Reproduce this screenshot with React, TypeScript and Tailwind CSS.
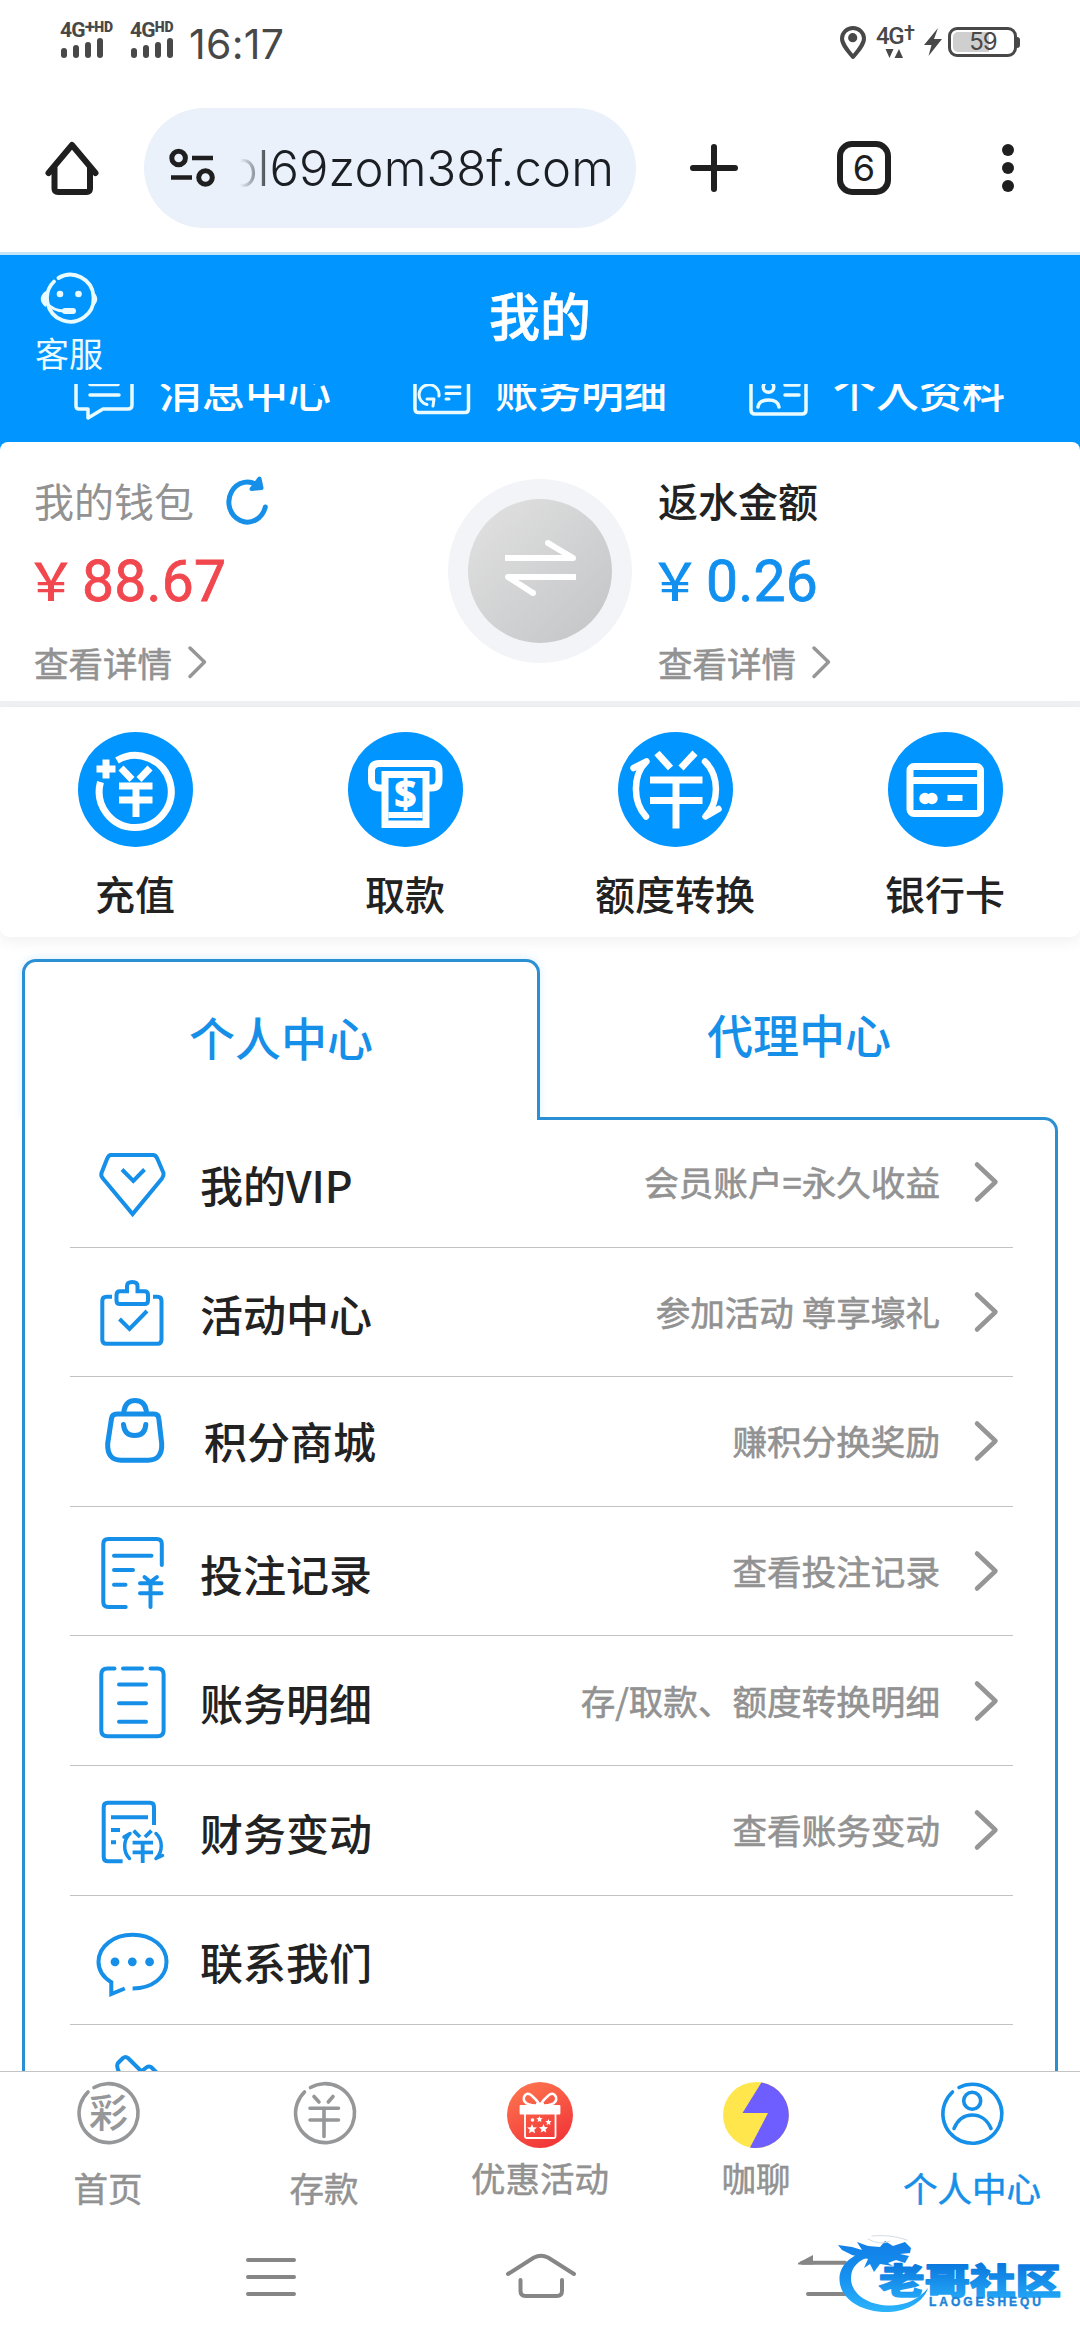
import type { ReactNode } from "react";

const BLUE = "#168fe8";
const GREY = "#969799";

type IconProps = {
  box: [number, number, number, number];
  color?: string;
  stroke?: number;
  className?: string;
  butt?: boolean;
  children: ReactNode;
};

/* Line icon; `box` is x, y, width, height of its view. */
function Icon({ box, color = BLUE, stroke = 4, className = "", butt = false, children }: IconProps) {
  return (
    <svg
      viewBox={box.join(" ")}
      width={box[2]}
      height={box[3]}
      fill="none"
      stroke={color}
      strokeWidth={stroke}
      strokeLinecap={butt ? "butt" : "round"}
      strokeLinejoin={butt ? "miter" : "round"}
      className={`shrink-0 ${className}`}
    >
      {children}
    </svg>
  );
}

function Signal({ plus }: { plus?: boolean }) {
  return (
    <div className="flex flex-col">
      <div className="flex h-[15px] items-start font-['Roboto'] text-[21px] leading-[16px] font-bold tracking-[-0.8px]">
        <span>4G</span>
        {plus && <span className="text-[19px] leading-[9px]">+</span>}
        <span className="text-[14px] leading-[11px] font-black tracking-[-0.2px]">HD</span>
      </div>
      <div className="mt-px flex h-[20px] items-end gap-[6px] pl-px">
        <i className="h-[10px] w-[6px] rounded-sm bg-[#484848]" />
        <i className="h-[13px] w-[6px] rounded-sm bg-[#484848]" />
        <i className="h-[16px] w-[6px] rounded-sm bg-[#484848]" />
        <i className="h-[20px] w-[6px] rounded-sm bg-[#484848]" />
      </div>
    </div>
  );
}

function StatusBar() {
  return (
    <div className="flex h-[90px] shrink-0 items-start text-[#484848]">
      <div className="mt-[22px] ml-[60px] w-[70px]"><Signal plus /></div>
      <div className="mt-[22px] w-[59px]"><Signal /></div>
      <div className="mt-[24px] font-['Inter'] text-[41px] leading-[41px] tracking-[0.3px]">16:17</div>
      <Icon box={[838, 24, 30, 38]} color="#484848" stroke={4} className="mt-[24px] ml-auto">
        <path d="M853 57C847 50 842 44 842 38.500A11 10.500 0 0 1 864 38.500C864 44 859 50 853 57Z" />
        <circle cx="852.700" cy="37.700" r="4.600" fill="#484848" stroke="none" />
      </Icon>
      <div className="mt-[26px] ml-[8px] flex w-[40px] flex-col">
        <div className="flex h-[20px] font-['Roboto'] text-[24px] leading-[20px] font-medium tracking-[-1.5px]">
          <span>4G</span>
          <span className="ml-px text-[20px] leading-[14px]">†</span>
        </div>
        <Icon box={[884, 48, 20, 11]} color="none" className="ml-[8px] mt-[2px]">
          <path d="M885.500 49h8l-4 9zM894.500 58h8.500l-4-9z" fill="#484848" />
        </Icon>
      </div>
      <Icon box={[922, 26, 22, 34]} color="none" className="mt-[26px] ml-[6px]">
        <path d="M938 28L924 45H931.500L928.500 56L942 39H934Z" fill="#484848" />
      </Icon>
      <div className="mt-[27px] ml-[4px] flex h-[30px] w-[69px] items-center rounded-[9px] border-[3px] border-[#484848] p-[2px]">
        <div className="flex h-full w-[36px] items-center justify-center overflow-visible rounded-l-[5px] bg-[#cfcfcf] pl-[24px]">
          <span className="font-['Inter'] text-[24px] leading-[24px] tracking-[-1px]">59</span>
        </div>
      </div>
      <i className="mt-[37px] mr-[60px] h-[11px] w-[3px] rounded-r bg-[#484848]" />
    </div>
  );
}

function BrowserBar() {
  return (
    <div className="flex h-[162px] shrink-0 items-start border-b-0">
      <Icon box={[42, 138, 60, 60]} color="#1f1f1f" stroke={6} className="mt-[48px] ml-[42px]">
        <path d="M48.500 173L72 145L95.500 173M54.500 167V188.500Q54.500 192 58 192H86.500Q90 192 90 188.500V167" />
      </Icon>
      <div className="mt-[18px] ml-[42px] flex h-[120px] w-[492px] items-center rounded-full bg-[#eaf1fb] pr-[22px] pl-[24px]">
        <Icon box={[168, 146, 50, 44]} color="#1f1f1f" stroke={5} butt>
          <circle cx="178.600" cy="158" r="6.800" />
          <circle cx="205.500" cy="177.500" r="6.800" />
          <path d="M192 158h21M171 177.500h21" strokeWidth="4.500" />
        </Icon>
        <div className="ml-[22px] flex h-[60px] flex-1 items-center justify-end overflow-hidden [mask-image:linear-gradient(to_right,transparent,black_34px)] whitespace-nowrap">
          <span className="relative top-px font-['Inter'] text-[49px] leading-[60px] font-light tracking-[0.1px] text-[#1b1f24]">ol69zom38f.com</span>
        </div>
      </div>
      <Icon box={[688, 142, 52, 52]} color="#1f1f1f" stroke={6} className="mt-[52px] ml-[52px]">
        <path d="M693 168h42M714 147v42" />
      </Icon>
      <div className="mt-[51px] ml-[97px] flex h-[54px] w-[54px] items-center justify-center rounded-[15px] border-[6px] border-[#1f1f1f]">
        <span className="font-['Inter'] text-[36px] leading-[36px] text-[#1f1f1f]">6</span>
      </div>
      <div className="mt-[54px] ml-[111px] flex flex-col gap-[6px]">
        <i className="size-[12px] rounded-full bg-[#1f1f1f]" />
        <i className="size-[12px] rounded-full bg-[#1f1f1f]" />
        <i className="size-[12px] rounded-full bg-[#1f1f1f]" />
      </div>
    </div>
  );
}

function Header() {
  return (
    <div className="flex h-[190px] shrink-0 flex-col border-t-[3px] border-[#c5e4f8] bg-[#0095ff] text-white">
      <div className="grid h-[129px] grid-cols-[200px_1fr_200px]">
        <div className="flex flex-col items-start">
          <Icon box={[38, 271, 62, 56]} color="#e9fbff" stroke={3.800} className="mt-[16px] ml-[38px]">
            <path d="M58.500 278A23.300 23.500 0 1 1 54 281.500" />
            <path d="M45.500 292q-8 7 0 14zM92.500 292q8 7 0 14z" fill="#e9fbff" strokeWidth="1.500" />
            <path d="M46 303Q54 311 64 311" strokeWidth="3" />
            <path d="M65 311h8" strokeWidth="6" />
            <circle cx="60" cy="294" r="3.300" fill="#e9fbff" stroke="none" />
            <circle cx="78.500" cy="294" r="3.300" fill="#e9fbff" stroke="none" />
          </Icon>
          <span className="ml-[35px] pt-px text-[34px] leading-[50px] text-[#e9fbff]">客服</span>
        </div>
        <h1 className="text-center text-[51px] leading-[118px] font-medium [-webkit-text-stroke:0.6px_currentColor]">我的</h1>
      </div>
      <div className="flex h-[58px] items-start overflow-hidden text-[43px] leading-[10px] font-medium">
        <Icon box={[72, 384, 64, 38]} color="#e9fbff" stroke={3.500} className="ml-[72px]">
          <path d="M76 375V406Q76 409 79 409H88V418L103 409H128Q132 409 132 405V375M90 384.500h28M90 395h29" />
        </Icon>
        <span className="ml-[23px] w-[180px]">消息中心</span>
        <Icon box={[410, 384, 62, 34]} color="#e9fbff" stroke={3.500} className="ml-[72px]">
          <path d="M414 375V409Q414 412.500 417.500 412.500H464Q467.500 412.500 467.500 409V375" />
          <path d="M426 404.500A10 10 0 1 1 438 396M426 399l7 0l-1 7M445 387h14M445 393.500h14M445 399h3" strokeWidth="3" />
        </Icon>
        <span className="ml-[22px] w-[180px]">账务明细</span>
        <Icon box={[746, 384, 64, 34]} color="#e9fbff" stroke={3.500} className="ml-[72px]">
          <path d="M750 375V410Q750 414 754 414H801Q805 414 805 410V375" />
          <circle cx="767.500" cy="387" r="5.300" />
          <path d="M757 407Q758 400 767.500 400Q777 400 778 407M784 385h14M784 395h14" />
        </Icon>
        <span className="ml-[22px]">个人资料</span>
      </div>
    </div>
  );
}

function Detail() {
  return (
    <div className="mt-[32px] flex h-[36px] items-center text-[34.500px] leading-[36px] text-[#929292] [-webkit-text-stroke:0.6px_currentColor]">
      查看详情
      <Icon box={[186, 645, 24, 38]} color="#969696" stroke={3.500} className="ml-[13px]">
        <path d="M191 650L205.500 664L191 678.500" />
      </Icon>
    </div>
  );
}

function Amount({ value }: { value: string }) {
  return (
    <>
      <span className="relative -top-[4px] -ml-[9px] w-[57px] text-[52px] leading-[58px] font-medium">￥</span>
      <span className="relative -top-px font-['Roboto'] text-[57px] leading-[58px] tracking-[0.2px] [-webkit-text-stroke:0.8px_currentColor]">{value}</span>
    </>
  );
}

function Wallet() {
  return (
    <div className="bg-[#0095ff]">
      <div className="grid h-[259px] shrink-0 grid-cols-[448px_184px_1fr] rounded-t-[8px] bg-white">
        <div className="flex flex-col pl-[34px]">
          <div className="mt-[33px] flex h-[50px] items-center text-[40px] leading-[50px] font-normal text-[#929292]">
            我的钱包
            <Icon box={[222, 476, 48, 52]} stroke={5} className="ml-[28px]">
              <path d="M265.300 509A18.500 20 0 1 1 259 488.500" />
              <path d="M259.500 480.500l2 9.500l-10 1z" fill={BLUE} strokeWidth="4" />
            </Icon>
          </div>
          <div className="mt-[29px] flex h-[58px] items-center text-[#f1474e]">
            <Amount value="88.67" />
          </div>
          <Detail />
        </div>
        <div className="mt-[37px] flex size-[184px] items-center justify-center rounded-full bg-[#f3f4f7]">
          <div className="flex size-[144px] items-center justify-center rounded-full bg-linear-to-br from-[#e2e2e2] to-[#c3c4c6]">
            <Icon box={[500, 536, 80, 64]} color="#ffffff" stroke={6} className="relative -top-[3px]" butt>
              <path d="M505 558H573L548 543M576 577H508L533 593" strokeLinejoin="round" />
              <circle cx="548" cy="543" r="3" fill="#fff" stroke="none" />
              <circle cx="533" cy="593" r="3" fill="#fff" stroke="none" />
            </Icon>
          </div>
        </div>
        <div className="flex flex-col pl-[26px]">
          <div className="mt-[33px] flex h-[50px] items-center text-[40px] leading-[50px] font-medium text-[#222222]">返水金额</div>
          <div className="mt-[29px] flex h-[58px] items-center text-[#1190f0]">
            <Amount value="0.26" />
          </div>
          <Detail />
        </div>
      </div>
    </div>
  );
}

function Action({ label, children }: { label: string; children: ReactNode }) {
  return (
    <div className="flex flex-col items-center">
      <div className="mt-[25px] flex size-[115px] items-center justify-center rounded-full bg-[#0095ff]">{children}</div>
      <span className="mt-[21px] text-[40px] leading-[50px] font-medium text-[#222222]">{label}</span>
    </div>
  );
}

function Actions() {
  return (
    <div className="shrink-0 bg-[#eff0f2] pt-[6px]">
      <div className="bg-white">
        <div className="grid h-[230px] grid-cols-4 rounded-[9px] bg-white shadow-[0_5px_14px_rgba(0,0,0,0.06)]">
          <Action label="充值">
            <Icon box={[77.500, 732, 115, 115]} color="#fff" stroke={7} butt>
              <path d="M116.500 760.500A36 36 0 1 1 100 782" />
              <path d="M96 769h19M105.500 759.500v19" />
              <path d="M120.500 768L131.500 779.500M149.500 768L138.500 779.500M118.500 786H152M118.500 800H152M135.500 786V817" />
            </Icon>
          </Action>
          <Action label="取款">
            <Icon box={[347.500, 732, 115, 115]} color="#fff" stroke={7} butt>
              <path d="M386 788H379Q371 788 371 780V771Q371 763.500 379 763.500H431Q438.500 763.500 438.500 771V780Q438.500 788 431 788H424" />
              <path d="M384.500 824.500V774.500H425.500V824.500Z" />
              <path d="M388 815h34" strokeWidth="6" />
              <path d="M388 822.500h34" strokeWidth="4" />
              <text x="405" y="808" textAnchor="middle" fontFamily="Noto Sans" fontSize="39" fontWeight="700" fill="#fff" stroke="#fff" strokeWidth="1">$</text>
            </Icon>
          </Action>
          <Action label="额度转换">
            <Icon box={[617.500, 732, 115, 115]} color="#fff" stroke={7} butt>
              <path d="M656.500 753L670 768M694.500 753L680.500 768M649.500 780H702M649.500 800.500H702M675.500 780V828.500" />
              <path d="M633 768L646 761.500C632 775 632 802 645.500 816.500M704.500 761.500C719 776 719 802 705 816.500L718 809" strokeLinecap="round" strokeLinejoin="round" strokeWidth="6.500" />
            </Icon>
          </Action>
          <Action label="银行卡">
            <Icon box={[887.500, 732, 115, 115]} color="#fff" stroke={7} butt>
              <rect x="909.500" y="766.500" width="70.500" height="47" rx="4" />
              <path d="M908 780.500h74" />
              <circle cx="924.500" cy="798.500" r="5.700" fill="#fff" stroke="none" />
              <circle cx="931.500" cy="798.500" r="5.700" fill="#fff" stroke="none" />
              <path d="M947 798h15" strokeWidth="6" />
            </Icon>
          </Action>
        </div>
      </div>
    </div>
  );
}

function Row({ icon, label, note, shift }: { icon: ReactNode; label: string; note?: string; shift?: boolean }) {
  return (
    <div className="flex h-[129.6px] shrink-0 items-center border-b border-[#c2c2c2]">
      <div className="flex h-full w-[130px] items-start">{icon}</div>
      <span className={`${shift ? "ml-[4px] pb-[2px]" : "pt-[3px]"} text-[43px] leading-[60px] font-medium text-[#222222]`}>{label}</span>
      {note && (
        <div className="ml-auto flex items-center pr-[12px] text-[34.600px] leading-[50px] text-[#929292]">
          <span className="relative -top-px [-webkit-text-stroke:0.6px_currentColor]">{note}</span>
          <Icon box={[972, 1160, 29, 46]} color="#969696" stroke={4.500} className="ml-[32px]">
            <path d="M977 1165.500L995.500 1183L977 1200.500" />
          </Icon>
        </div>
      )}
    </div>
  );
}

function Menu() {
  return (
    <div className="flex h-[1134px] shrink-0 flex-col px-[22px] pt-[22px]">
      <div className="z-10 flex h-[161px] shrink-0">
        <div className="h-[161px] w-[518px] rounded-t-[14px] border-x-[3px] border-t-[3px] border-[#2a8fd3] bg-white text-center text-[46px] leading-[149px] font-medium text-[#168fe8] shadow-[0_-1px_8px_rgba(0,149,255,0.14)] [clip-path:inset(-12px_-8px_0_-12px)]">
          个人中心
        </div>
        <div className="h-[158px] w-[518px] text-center text-[46px] leading-[149px] font-medium text-[#168fe8]">代理中心</div>
      </div>
      <div className="-mt-[3px] flex min-h-0 flex-1 flex-col overflow-hidden rounded-tr-[14px] border-x-[3px] border-t-[3px] border-[#2a8fd3] pr-[42px] pl-[45px]">
        <div className="-mt-[2px] flex shrink-0 flex-col">
          <Row label="我的VIP" note="会员账户=永久收益" icon={
            <Icon box={[70, 1118, 110, 110]}>
              <path d="M111 1155H153Q156 1155 157.500 1159L163.500 1173Q164 1176 162 1178.500L132.600 1214L103 1178.500Q100.500 1176 101.500 1173L107 1159Q108.500 1155 111 1155Z" strokeLinejoin="miter" />
              <path d="M122 1169.500L133.300 1181L144.500 1169.500" strokeLinecap="butt" strokeLinejoin="miter" />
            </Icon>
          } />
          <Row label="活动中心" note="参加活动 尊享壕礼" icon={
            <Icon box={[70, 1248, 110, 110]} butt>
              <path d="M112 1296.700H106.500Q102.300 1296.700 102.300 1301V1339.700Q102.300 1343.700 106.500 1343.700H157.500Q161.500 1343.700 161.500 1339.700V1301Q161.500 1296.700 157.500 1296.700H153" />
              <path d="M120 1291.300H127V1286Q127 1282 132.300 1282Q137.500 1282 137.500 1286V1291.300H144.500Q148 1291.300 148 1295V1300.500Q148 1304 144.500 1304H120Q116.500 1304 116.500 1300.500V1295Q116.500 1291.300 120 1291.300Z" />
              <path d="M119.500 1319L129.500 1329L147 1311" />
            </Icon>
          } />
          <Row shift label="积分商城" note="赚积分换奖励" icon={
            <Icon box={[70, 1377.500, 110, 110]} stroke={5}>
              <path d="M117 1414.500H154Q158.500 1414.500 158.800 1419L161.700 1444Q162.500 1460.700 148 1460.700H121Q107 1460.700 107.700 1444L111.500 1419Q112 1414.500 117 1414.500Z" />
              <path d="M124 1412V1411Q126 1401 135 1401Q144.500 1401 146.300 1411V1412M123.500 1425Q124.500 1436 134.700 1436Q145 1436 145.800 1425" />
            </Icon>
          } />
          <Row label="投注记录" note="查看投注记录" icon={
            <Icon box={[70, 1507, 110, 110]}>
              <path d="M161.800 1565V1544Q161.800 1539 156.800 1539H108.300Q103.300 1539 103.300 1544V1602Q103.300 1607 108.300 1607H125.700M114 1555.700H151.500M114 1570H133M114 1584.700H125.500" />
              <path d="M144.500 1577L150.500 1582L156.900 1577M140 1583.300H161.500M140 1593.300H161.500M150.500 1583V1607" />
            </Icon>
          } />
          <Row label="账务明细" note="存/取款、额度转换明细" icon={
            <Icon box={[70, 1636.500, 110, 110]}>
              <path d="M114.500 1669H107.500Q101.300 1669 101.300 1675V1731Q101.300 1736.700 107.500 1736.700H157.500Q163.600 1736.700 163.600 1731V1675Q163.600 1669 157.500 1669H150.500M123 1669H142M119 1685H146M119 1703.700H146M119 1722.300H146" />
            </Icon>
          } />
          <Row label="财务变动" note="查看账务变动" icon={
            <Icon box={[70, 1766, 110, 110]} butt>
              <path d="M154 1825V1807Q154 1802.700 150 1802.700H108Q103.700 1802.700 103.700 1807V1857Q103.700 1861.300 108 1861.300H122.600M111 1817.300H148M111 1830H120M111 1842.300H116" />
              <path d="M133.600 1830.700L140 1837M151.500 1830.700L145 1837M132.600 1842.700H153M132.600 1852.300H153M142.700 1842V1863" strokeWidth="3.800" />
              <path d="M124 1837L130 1833.500C123 1840 123 1852 129.500 1858.500M156 1833.500C163 1840 163 1852 156 1858.500L162.500 1855.500" strokeWidth="3.500" strokeLinecap="round" strokeLinejoin="round" />
            </Icon>
          } />
          <Row label="联系我们" icon={
            <Icon box={[70, 1895.500, 110, 110]} butt>
              <path d="M132.600 1988C152 1988 166.500 1977 166.500 1961.300C166.500 1946 152 1934.300 132.600 1934.300C113.500 1934.300 98.500 1946 98.500 1961.300C98.500 1970 103.500 1977 111.300 1981.700V1993.500L124.800 1988" />
              <circle cx="115" cy="1961.300" r="4.400" fill={BLUE} stroke="none" />
              <circle cx="132.300" cy="1961.300" r="4.400" fill={BLUE} stroke="none" />
              <circle cx="149.600" cy="1961.300" r="4.400" fill={BLUE} stroke="none" />
            </Icon>
          } />
          <Icon box={[70, 2025, 110, 60]}>
            <path d="M119 2072Q116 2066 118 2063L123 2058Q125.500 2056 128 2058L142 2072M143 2070L147 2067Q149 2066 151 2067L156 2072" />
          </Icon>
        </div>
      </div>
    </div>
  );
}

function Tab({ label, raised, active, children }: { label: string; raised?: boolean; active?: boolean; children: ReactNode }) {
  return (
    <div className={`flex flex-col items-center pt-[9px] text-[34.500px] [-webkit-text-stroke:0.5px_currentColor] ${active ? "text-[#168fe8]" : "text-[#929292]"}`}>
      {children}
      <span className={`${raised ? "mt-[3px]" : "mt-[15px]"} leading-[50px]`}>{label}</span>
    </div>
  );
}

function TabBar() {
  return (
    <div className="grid h-[149px] shrink-0 grid-cols-5 border-t border-[#c4c4c4] bg-white">
      <Tab label="首页">
        <Icon box={[75, 2081, 66, 66]} color={GREY} stroke={3.600}>
          <path d="M94 2087.500A29.500 29.500 0 1 1 88 2092" />
          <text x="108.500" y="2127" textAnchor="middle" fontFamily="Noto Sans CJK SC" fontSize="39" fontWeight="500" fill={GREY} stroke="none">彩</text>
        </Icon>
      </Tab>
      <Tab label="存款">
        <Icon box={[291, 2081, 66, 66]} color={GREY} stroke={3.600}>
          <path d="M310.500 2087.500A29.500 29.500 0 1 1 304.500 2092" />
          <path d="M314 2096.500L319 2102M333 2096.500L328.300 2102M310 2108.300H338.500M310 2120H338.500M324 2108V2136.500" />
        </Icon>
      </Tab>
      <Tab label="优惠活动" raised>
        <Icon box={[507, 2081, 66, 68]} color="#fff" stroke={1.800}>
          <defs>
            <linearGradient id="gift" x1="0" y1="0" x2="0.500" y2="1">
              <stop offset="0" stopColor="#ff7a50" />
              <stop offset="1" stopColor="#f2393a" />
            </linearGradient>
          </defs>
          <circle cx="540" cy="2115" r="33" fill="url(#gift)" stroke="none" />
          <path d="M520.500 2106h39v7.500h-39z" fill="#fff" />
          <path d="M525 2114v22.500q0 1.500 1.500 1.500h27.500q1.500 0 1.500-1.500V2114" />
          <path d="M540 2105C534 2106 522 2105 524 2097Q526 2092 531 2095Q536 2099 540 2105C546 2106 558 2105 556 2097Q554 2092 549 2095Q544 2099 540 2105Z" strokeWidth="2.500" />
          <path d="M536 2103h8v6h-8z" fill="#fff" stroke="none" />
          <path d="M532 2124l1.400 3.200 3.600.3-2.800 2.300 1 3.500-3.200-1.900-3.200 1.900 1-3.500-2.800-2.300 3.600-.3zM543.500 2124l1.300 3 3.200.3-2.500 2.100.9 3.200-2.900-1.700-2.900 1.700.9-3.200-2.500-2.100 3.200-.3z" fill="#fff" stroke="none" />
          <path d="M539.500 2116l.9 2.100 2.300.2-1.800 1.500.6 2.300-2-1.200-2 1.200.6-2.300-1.800-1.500 2.300-.2zM548.500 2119l.9 2.100 2.300.2-1.800 1.500.6 2.300-2-1.200-2 1.200.6-2.300-1.800-1.500 2.300-.2z" fill="#fff" stroke="none" />
          <circle cx="532.500" cy="2120" r="1.800" fill="#fff" stroke="none" />
        </Icon>
      </Tab>
      <Tab label="咖聊" raised>
        <Icon box={[723, 2081, 66, 68]} color="none">
          <circle cx="756" cy="2115" r="33" fill="#ffe64d" />
          <path d="M761.400 2082.400L742.500 2113H768L750 2147.500A33 33 0 1 0 761.400 2082.400Z" fill="#6e5dff" />
        </Icon>
      </Tab>
      <Tab label="个人中心" active>
        <Icon box={[938, 2081, 66, 66]} stroke={3.600}>
          <path d="M958 2087.500A29.500 29.500 0 1 1 951.500 2092" />
          <circle cx="971.200" cy="2100.700" r="8.500" />
          <path d="M953 2128.500C957 2119 964 2115 971.200 2115S986 2119 990 2128.500" />
        </Icon>
      </Tab>
    </div>
  );
}

function SystemBar() {
  return (
    <div className="flex h-[120px] shrink-0 items-start bg-white">
      <Icon box={[244, 2256, 54, 42]} color="#868686" className="mt-[36px] ml-[244px]">
        <path d="M248 2260h46M248 2277h46M248 2294h46" />
      </Icon>
      <Icon box={[504, 2252, 74, 48]} color="#868686" className="mt-[32px] ml-[206px]">
        <path d="M508 2274L534 2257.500Q541 2254 548 2257.500L574 2274M520.500 2280V2291Q520.500 2296 525.500 2296H557Q562 2296 562 2291V2280" />
      </Icon>
      <Icon box={[796, 2230, 270, 86]} color="none" stroke={4} className="mt-[10px] ml-[218px]">
        <defs>
          <linearGradient id="brand" gradientUnits="userSpaceOnUse" x1="0" y1="2240" x2="0" y2="2312">
            <stop offset="0" stopColor="#127fe6" />
            <stop offset="0.500" stopColor="#158ff0" />
            <stop offset="1" stopColor="#2bb4fb" />
          </linearGradient>
          <linearGradient id="name" gradientUnits="userSpaceOnUse" x1="0" y1="2264" x2="0" y2="2297">
            <stop offset="0" stopColor="#0b78de" />
            <stop offset="1" stopColor="#21a4f5" />
          </linearGradient>
        </defs>
        <path d="M802 2262.700H845M808 2294H848" stroke="#868686" />
        <path d="M798 2263L813 2255V2264.500H798Z" fill="#868686" />
        <path d="M866 2251C850 2256 839 2266 839.500 2280C840 2299 862 2313 889 2312C909 2311 924 2301 928 2288C919 2299 906 2305 892 2305.500C868 2306 851 2294 851 2278C851 2267 858 2260 872 2256Z" fill="url(#brand)" />
        <path d="M838 2245L852 2247L862 2250L857 2242L868 2246L880 2247L885 2241L893 2246L905 2242L911 2248L910 2253L900 2254L909 2256L905 2263L896 2260L888 2263L893 2266L880 2264L874 2272L870 2264L864 2268L868 2259L852 2255L842 2250Z" fill="url(#brand)" />
        <path d="M868 2239Q880 2246 890 2241M872 2236Q890 2234 907 2240" stroke="#d5dbe0" strokeWidth="1" />
        <text x="879" y="2293.500" fontFamily="Noto Sans CJK SC" fontSize="35" fontWeight="900" fill="url(#name)" stroke="url(#name)" strokeWidth="1.500" textLength="182" lengthAdjust="spacingAndGlyphs">老哥社区</text>
        <text x="929" y="2305.500" fontFamily="Liberation Sans" fontSize="12" fontWeight="700" fill="#1c84d8" stroke="#1c84d8" strokeWidth="0.400" textLength="112">LAOGESHEQU</text>
      </Icon>
    </div>
  );
}

export default function App() {
  return (
    <div className="flex h-[2340px] w-[1080px] flex-col overflow-hidden bg-white font-['Noto_Sans_CJK_SC',sans-serif]">
      <StatusBar />
      <BrowserBar />
      <Header />
      <Wallet />
      <Actions />
      <Menu />
      <TabBar />
      <SystemBar />
    </div>
  );
}
